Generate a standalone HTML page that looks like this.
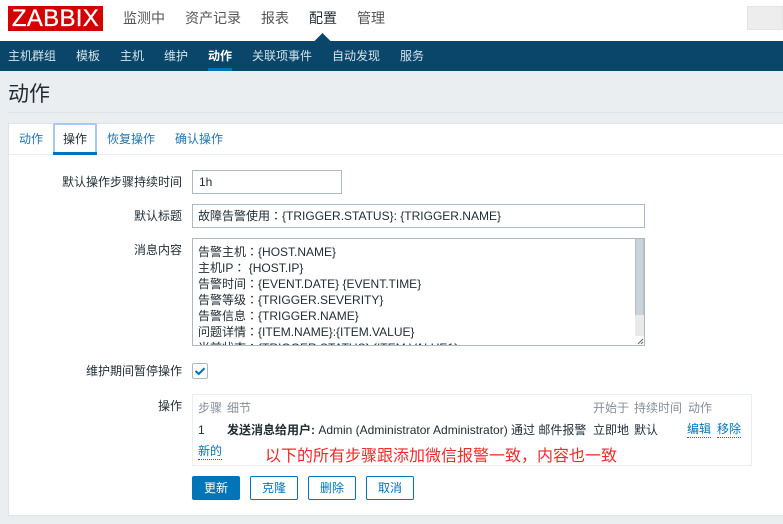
<!DOCTYPE html>
<html><head><meta charset="utf-8">
<style>
html,body{margin:0;padding:0}
body{width:783px;height:524px;overflow:hidden;position:relative;background:#ebeef0;font-family:"Liberation Sans","Noto Sans CJK SC",sans-serif;font-size:12px;color:#1f2c33}
.a{position:absolute;white-space:nowrap}
.b{position:absolute;box-sizing:border-box}
.t{position:absolute;white-space:nowrap;line-height:16px;height:16px}
.c{font-family:"Noto Sans CJK TC",sans-serif}
.top{font-size:14px;color:#555;line-height:20px;height:20px;top:8px}
.sub{font-size:12px;color:#d5e2ea;line-height:16px;height:16px;top:48px}
.tab{font-size:12px;color:#1d76b3;top:131px}
.lab{right:601px;color:#1f2c33}
.inp{background:#fff;border:1px solid #acbbc3}
.hd{color:#869099;top:400px}
.lnk{color:#0275b8;border-bottom:1px dotted #0275b8;line-height:15px;height:15px}
.btn{position:absolute;box-sizing:border-box;top:476px;width:48px;height:24px;border:1px solid #0275b8;border-radius:2px;color:#0275b8;text-align:center;line-height:22px;background:#fff}
</style></head><body>
<div class="b" style="left:0;top:0;width:783px;height:41px;background:#fff"></div>
<div class="b" style="left:8px;top:6px;width:95px;height:25px;background:#d40000"></div>
<div class="a" style="left:8px;top:6px;width:95px;height:25px;line-height:26px;text-align:center;color:#fff;font-size:24px;letter-spacing:.3px;-webkit-text-stroke:.3px #fff">ZABBIX</div>
<div class="t top" style="left:123px">监测中</div>
<div class="t top" style="left:185px">资产记录</div>
<div class="t top" style="left:261px">报表</div>
<div class="t top" style="left:309px;color:#1f2c33">配置</div>
<div class="t top" style="left:357px">管理</div>
<div class="b" style="left:747px;top:6px;width:36px;height:24px;background:#ededed;border:1px solid #e5e5e5"></div>
<div class="b" style="left:0;top:41px;width:783px;height:30px;background:#0a466a"></div>
<svg class="a" style="left:314px;top:33px" width="18" height="8"><path d="M8.5 0L0.5 8H16.5Z" fill="#0a466a"/></svg>
<div class="t sub" style="left:8px">主机群组</div>
<div class="t sub" style="left:76px">模板</div>
<div class="t sub" style="left:120px">主机</div>
<div class="t sub" style="left:164px">维护</div>
<div class="t sub" style="left:208px;color:#fff;font-weight:bold">动作</div>
<div class="b" style="left:208px;top:68px;width:24px;height:3px;background:#0275b8"></div>
<div class="t sub" style="left:252px">关联项事件</div>
<div class="t sub" style="left:332px">自动发现</div>
<div class="t sub" style="left:400px">服务</div>
<div class="a" style="left:8px;top:80px;font-size:21px;line-height:30px;color:#1f2c33">动作</div>
<div class="b" style="left:8px;top:112px;width:775px;height:1px;background:#dfe4e7"></div>
<div class="b" style="left:8px;top:123px;width:775px;height:393px;background:#fff;border:1px solid #dfe4e7;border-right:0"></div>
<div class="b" style="left:9px;top:154px;width:774px;height:1px;background:#ebeef0"></div>
<div class="t tab" style="left:19px">动作</div>
<div class="b" style="left:53px;top:123px;width:44px;height:32px;border:2px solid #a6c8fb;border-bottom:0;border-radius:2px 2px 0 0"></div>
<div class="b" style="left:53px;top:152px;width:44px;height:3px;background:#0275b8"></div>
<div class="t tab" style="left:63px;color:#1f2c33">操作</div>
<div class="t tab" style="left:107px">恢复操作</div>
<div class="t tab" style="left:175px">确认操作</div>
<div class="t lab" style="top:174px">默认操作步骤持续时间</div>
<div class="b inp" style="left:192px;top:170px;width:150px;height:24px"></div>
<div class="t" style="left:199px;top:174px">1h</div>
<div class="t lab" style="top:208px">默认标题</div>
<div class="b inp" style="left:192px;top:204px;width:453px;height:24px"></div>
<div class="t" style="left:198px;top:208px">故障告警使用<span class="c">：</span>{TRIGGER.STATUS}: {TRIGGER.NAME}</div>
<div class="t lab" style="top:242px">消息内容</div>
<div class="b inp" style="left:192px;top:238px;width:453px;height:108px"></div>
<div class="b" style="left:193px;top:239px;width:442px;height:106px;overflow:hidden">
<div class="a" style="left:5px;top:5px;line-height:16px">告警主机<span class="c">：</span>{HOST.NAME}<br>主机IP<span class="c">：</span> {HOST.IP}<br>告警时间<span class="c">：</span>{EVENT.DATE} {EVENT.TIME}<br>告警等级<span class="c">：</span>{TRIGGER.SEVERITY}<br>告警信息<span class="c">：</span>{TRIGGER.NAME}<br>问题详情<span class="c">：</span>{ITEM.NAME}:{ITEM.VALUE}<br>当前状态<span class="c">：</span>{TRIGGER.STATUS}:{ITEM.VALUE1}</div>
</div>
<div class="b" style="left:635px;top:239px;width:9px;height:76px;background:#c9d3d8;border-right:1px solid #b4c1c8;border-left:1px solid #b4c1c8"></div>
<div class="b" style="left:635px;top:315px;width:9px;height:21px;background:#e9e9e9"></div>
<svg class="a" style="left:635px;top:336px" width="9" height="9"><rect width="9" height="9" fill="#fff"/><path d="M3 8L8 3M6 8L8 6" stroke="#666" stroke-width="1"/></svg>
<div class="t lab" style="top:363px">维护期间暂停操作</div>
<div class="b" style="left:192px;top:363px;width:16px;height:16px;background:#fff;border:1px solid #acbbc3;border-radius:2px"></div>
<svg class="a" style="left:192px;top:363px" width="16" height="16"><path d="M3.5 8L6.8 11L12.5 5.2" fill="none" stroke="#0275b8" stroke-width="2"/></svg>
<div class="t lab" style="top:398px">操作</div>
<div class="b" style="left:192px;top:394px;width:560px;height:72px;border:1px solid #ebeef0;background:#fff"></div>
<div class="t hd" style="left:198px">步骤</div>
<div class="t hd" style="left:227px">细节</div>
<div class="t hd" style="left:593px">开始于</div>
<div class="t hd" style="left:634px">持续时间</div>
<div class="t hd" style="left:688px">动作</div>
<div class="t" style="left:198px;top:422px">1</div>
<div class="t" style="left:227px;top:422px"><b>发送消息给用户:</b> Admin (Administrator Administrator) 通过 邮件报警</div>
<div class="t" style="left:593px;top:422px">立即地</div>
<div class="t" style="left:634px;top:422px">默认</div>
<div class="t lnk" style="left:687px;top:422px">编辑</div>
<div class="t lnk" style="left:717px;top:422px">移除</div>
<div class="t lnk" style="left:198px;top:444px">新的</div>
<div class="a" style="left:265px;top:446px;font-size:16px;line-height:22px;color:#f02a2a">以下的所有步骤跟添加微信报警一致，内容也一致</div>
<div class="btn" style="left:192px;background:#0275b8;color:#fff">更新</div>
<div class="btn" style="left:250px">克隆</div>
<div class="btn" style="left:308px">删除</div>
<div class="btn" style="left:366px">取消</div>
</body></html>
